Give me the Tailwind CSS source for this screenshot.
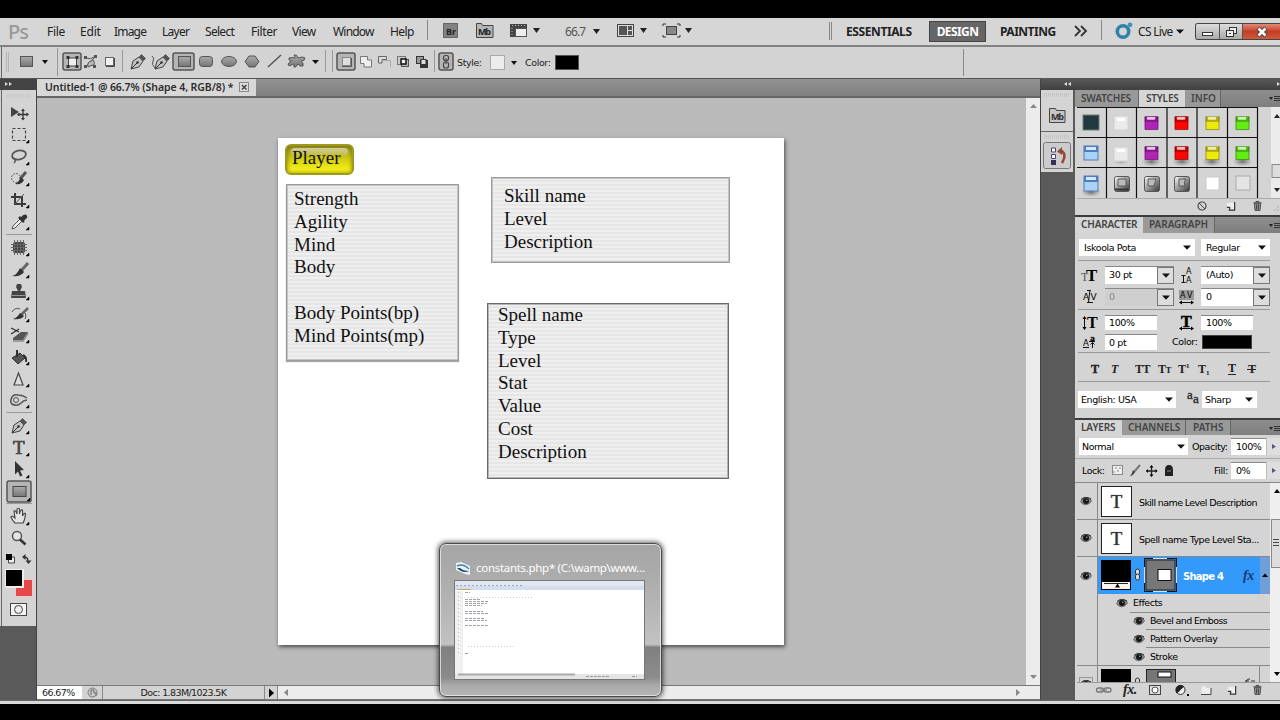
<!DOCTYPE html>
<html lang="en">
<head>
<meta charset="utf-8">
<title>Untitled-1 @ 66.7%</title>
<script src="https://cdn.jsdelivr.net/npm/@tailwindcss/browser@4"></script>
</head>
<body class="bg-black">
<svg class="absolute size-0">
  <defs>
    <linearGradient id="gr" x1="0" y1="0" x2="0" y2="1"><stop offset="0" stop-color="#ababab"/><stop offset="1" stop-color="#757575"/></linearGradient>
    <linearGradient id="metal" x1="0" y1="0" x2="1" y2="1"><stop offset="0" stop-color="#fff"/><stop offset=".5" stop-color="#999"/><stop offset="1" stop-color="#333"/></linearGradient>
    <radialGradient id="sh"><stop offset="0" stop-color="#555" stop-opacity=".8"/><stop offset="1" stop-color="#777" stop-opacity="0"/></radialGradient>
    <symbol id="eye" viewBox="0 0 12 10"><path d="M.5 5.5Q3 1 7 1.500T11.500 5Q9 9 5.500 8.800T.5 5.500Z" fill="#8a8a8a" stroke="#555" stroke-width=".7"/><circle cx="6" cy="5" r="3" fill="#161616"/><circle cx="6.800" cy="4.200" r=".8" fill="#aaa"/><path d="M1 3.500Q5 -.5 11 3" fill="none" stroke="#333"/></symbol>
    <symbol id="menu" viewBox="0 0 11 8"><path d="M0 2h4L2 5z" fill="#222"/><path d="M5 1.500h6M5 3.500h6M5 5.500h6" stroke="#333" stroke-width="1"/></symbol>
    <symbol id="down" viewBox="0 0 8 5"><path d="M0 .5h8L4 4.800z" fill="#111"/></symbol>
    <symbol id="trash" viewBox="0 0 10 12"><path d="M1.500 4h7l-.7 7.500H2.200z" fill="#999" stroke="#444"/><path d="M.5 3h9M3 1.500h4M4 5v5.500M6 5v5.500" stroke="#333"/></symbol>
    <symbol id="new" viewBox="0 0 11 11"><path d="M1 2h8v8H3V7H1z" fill="#eee"/><path d="M9.500 1v9H3M1 7h3v3" fill="none" stroke="#333" stroke-width="1.300"/></symbol>
    <symbol id="pen" viewBox="0 0 16 16"><path d="M1 15l2-8 6-4 4 4-4 6z" fill="#c2c2c2" stroke="#444"/><path d="M9.500 2.500l2-2 4 4-2 2z" fill="#555" stroke="#333" stroke-width=".6"/><path d="M1 15l6-6" stroke="#333"/><circle cx="7.500" cy="8.500" r="1.300" fill="#333"/></symbol>
    <symbol id="chip" viewBox="0 0 16 16"><rect x=".8" y=".8" width="14.400" height="14.400" rx="1" fill="currentColor"/><rect x=".8" y=".8" width="14.400" height="6" fill="#000" opacity=".25"/><rect x="3" y="1.500" width="9" height="3" rx="1" fill="#fff" opacity=".75"/><path d="M1 1v14h14V1" fill="none" stroke="#000" stroke-opacity=".35"/></symbol>
    <symbol id="logo" viewBox="0 0 18 17"><circle cx="8" cy="9.500" r="5.700" fill="none" stroke="#2e82a8" stroke-width="3.600"/><circle cx="15" cy="2.800" r="2.400" fill="#3b93b8"/></symbol>
  </defs>
</svg>
<div class="flex h-[720px] w-[1280px] flex-col overflow-hidden bg-black pt-[18px] font-['Noto_Sans','Open_Sans',sans-serif] text-[#222]">

  <!-- Menu bar -->
  <header class="flex h-[27px] shrink-0 items-center bg-[#d6d6d6] text-[12px] leading-none">
    <div class="w-[47px] pl-[8px] text-[20px] font-medium tracking-[-1px] text-[#999]">Ps</div>
    <nav class="flex w-[380px] items-center">
      <span class="w-[33px] tracking-[-.3px]">File</span><span class="w-[34px] tracking-[-.2px]">Edit</span><span class="w-[48px] tracking-[-.8px]">Image</span><span class="w-[43px] tracking-[-.7px]">Layer</span><span class="w-[46px] tracking-[-.7px]">Select</span><span class="w-[41px] tracking-[-.4px]">Filter</span><span class="w-[41px] tracking-[-.7px]">View</span><span class="w-[57px] tracking-[-.8px]">Window</span><span class="tracking-[-.6px]">Help</span>
    </nav>
    <svg class="shrink-0" width="133" height="27" viewBox="427 18 133 27">
      <path d="M427.500 20v20" stroke="#888"/>
      <rect x="443.500" y="23.500" width="14" height="14" fill="#828282" stroke="#666"/>
      <text x="446" y="35" font-family="Open Sans" font-size="9" font-weight="700" fill="#222">Br</text>
      <path d="M476.500 37.500v-14h5l1 2h10.500v12z" fill="#b5b5b5" stroke="#444"/>
      <text x="478" y="35" font-family="Open Sans" font-size="9" font-weight="700" fill="#222" textLength="13">Mb</text>
      <path d="M510 24h17v4h-12v9h-5z" fill="#444"/><path d="M512 25.500h14M512 28v8" stroke="#bbb" stroke-dasharray="1 2"/><rect x="515.500" y="28.500" width="11" height="8" fill="#eee" stroke="#555"/>
      <path d="M533 28h7l-3.500 5z" fill="#222"/>
    </svg>
    <span class="w-[33px] pl-[5px] tracking-[-.9px] text-[#555]">66.7</span>
    <svg class="mr-[17px] shrink-0" width="7" height="5"><path d="M0 0h7L3.500 5z" fill="#222"/></svg>
    <svg class="shrink-0" width="229" height="27" viewBox="617 18 229 27">
      <rect x="617.500" y="24.500" width="16" height="12" fill="#ddd" stroke="#444"/><path d="M619 26h8v9h-8zM628 26h4v4h-4zM628 31h4v4h-4z" fill="#555"/>
      <path d="M640 28h7l-3.500 5zM685 28h7l-3.500 5z" fill="#222"/>
      <rect x="666.500" y="26.500" width="10" height="8" fill="#888" stroke="#444"/><path d="M663 26v-2h3M677 24h3v2M663 35v2h3M677 37h3v-2" fill="none" stroke="#333"/><path d="M829.500 22v18M831.500 22v18" stroke="#888"/>
    </svg>
    <span class="w-[83px] text-[12px] font-bold tracking-[-.4px]">ESSENTIALS</span>
    <span class="flex h-[21px] w-[57px] items-center justify-center border border-[#444] bg-[#666] font-bold tracking-[-.6px] text-white">DESIGN</span>
    <span class="ml-[14px] w-[74px] font-bold tracking-[-.5px]">PAINTING</span>
    <svg class="shrink-0" width="64" height="27" viewBox="1074 18 64 27"><path d="M1075 26l5 5-5 5M1081 26l5 5-5 5" fill="none" stroke="#333" stroke-width="1.800"/><path d="M1101.500 20v20" stroke="#888"/><use href="#logo" x="1115" y="22" width="18" height="17"/></svg>
    <span class="w-[38px] tracking-[-.7px]">CS Live</span>
    <svg class="mr-[11px] shrink-0" width="8" height="5"><use href="#down" width="8" height="5"/></svg>
    <div class="flex h-[17px] w-[85px] overflow-hidden rounded-l-[3px] border border-r-0 border-[#444]">
      <div class="w-[24px] border-r border-[#555] bg-linear-to-b from-[#ddd] to-[#aaa]"><svg width="23" height="16"><rect x="6.500" y="8.500" width="10" height="3" fill="#fff" stroke="#333"/></svg></div>
      <div class="w-[23px] border-r border-[#555] bg-linear-to-b from-[#ddd] to-[#aaa]"><svg width="23" height="16"><rect x="9.500" y="3.500" width="7" height="6" fill="#eee" stroke="#333"/><rect x="6.500" y="6.500" width="7" height="6" fill="#eee" stroke="#333"/><rect x="9" y="9" width="2" height="1" fill="#333"/></svg></div>
      <div class="grow bg-linear-to-b from-[#e08a78] via-[#c33c22] to-[#cf5a3e]"><svg width="38" height="16"><path d="M15 4l8 8M23 4l-8 8" stroke="#444" stroke-width="4.500"/><path d="M15.500 4.500l7 7M22.500 4.500l-7 7" stroke="#fff" stroke-width="2.500"/></svg></div>
    </div>
  </header>
  <div class="h-[2px] shrink-0 bg-[#828282]"></div>

  <!-- Options bar -->
  <div class="flex h-[31px] shrink-0 items-center bg-[#d3d3d3] text-[11px] leading-none">
    <svg class="shrink-0" width="457" height="31" viewBox="0 47 457 31">
      <path d="M1.500 47v31" stroke="#666"/><path d="M6.500 52v20M8.500 52v20" stroke="#b5b5b5"/>
      <rect x="20.500" y="56.500" width="12" height="10" fill="url(#gr)" stroke="#555"/><path d="M42 60h6l-3 4z" fill="#111"/>
      <path d="M57.500 48v28M122.500 50v22M325.500 50v22M332.500 50v22M434.500 50v22" stroke="#999"/>
      <g fill="#b5b5b5" stroke="#555" stroke-width="1.500"><rect x="63" y="53" width="18" height="17" rx="2"/><rect x="173" y="53" width="21" height="17" rx="2"/><rect x="337" y="53" width="18" height="17" rx="2"/><rect x="439" y="53" width="14" height="17" rx="2"/></g>
      <rect x="68.500" y="58" width="8" height="8" fill="#eee" stroke="#444"/><path d="M66.500 56h3v3h-3zM75.500 56h3v3h-3zM66.500 65h3v3h-3zM75.500 65h3v3h-3z" fill="#333"/>
      <path d="M86 66q4-2 8-8M86 58q5 2 8-1" fill="none" stroke="#555"/><path d="M88 67q-1-3 1-5l4-2q2 2 1 5-3 0-6 2z" fill="#bbb" stroke="#555"/><path d="M84 56h3v3h-3zM94 55h3v3h-3zM84 65h3v3h-3zM93 65h3v3h-3z" fill="#555"/>
      <rect x="105.500" y="57.500" width="8" height="8" fill="#f0f0f0" stroke="#666"/><path d="M106 66.500h8.500V58" fill="none" stroke="#444"/>
      <use href="#pen" x="130" y="54" width="16" height="16"/><use href="#pen" x="154" y="54" width="16" height="16"/><path d="M152 56q3 2 1 5t2 7" fill="none" stroke="#555"/>
      <g fill="url(#gr)" stroke="#555"><rect x="178.500" y="56.500" width="12" height="10"/><rect x="199.500" y="56.500" width="13" height="10" rx="3"/><ellipse cx="229" cy="61.500" rx="7.500" ry="5"/><path d="M249 56h6l4 5.500-4 5.500h-6l-4-5.500z"/><path d="M294 55q3-1 4 3 5-2 7 0 0 3-4 3 3 2 2 5-3 1-5-2-2 4-4 3 0-3-1-3-3 3-5 1 0-2 3-4-3-1-2-3 4-1 6 0 0-2-1-3z"/></g>
      <path d="M268 67l13-12" stroke="#555" stroke-width="1.500"/><path d="M312 60h7l-3.500 4z" fill="#111"/>
      <rect x="342.500" y="57.500" width="8" height="8" fill="#ddd" stroke="#888"/><path d="M342 66.500h9.500V58" fill="none" stroke="#555"/>
      <path d="M360.500 56.500h7v3.500h4v7h-7.500v-3.500h-3.500z" fill="#eee" stroke="#777"/><path d="M378.500 63v-6.500h8v3h-4.500v3.500z" fill="#ddd" stroke="#666"/><path d="M383.500 60.500h7v6" fill="none" stroke="#aaa"/>
      <rect x="397.500" y="56.500" width="8" height="8" fill="#ccc" stroke="#777"/><rect x="401.500" y="59.500" width="7" height="7" fill="#bbb" stroke="#555"/><rect x="401" y="59" width="5" height="5" fill="#eee" stroke="#111" stroke-width="1.500"/>
      <rect x="416.500" y="56.500" width="7" height="7" fill="#999" stroke="#333"/><path d="M420 60h8v8h-8z" fill="#333"/><rect x="421" y="59.500" width="5" height="5" fill="#ddd" stroke="#333"/>
      <rect x="443.500" y="55.500" width="5" height="5" rx="2" fill="none" stroke="#444" stroke-width="1.200"/><rect x="443.500" y="62" width="5" height="6" rx="2" fill="none" stroke="#444" stroke-width="1.200"/><path d="M446 58v6" stroke="#444"/>
    </svg>
    <span class="w-[33px] font-['DejaVu_Sans'] text-[9.500px] tracking-[-.4px]">Style:</span>
    <div class="size-[15px] border border-[#aaa] bg-[#ececec]"></div>
    <svg class="mx-[6px] shrink-0" width="7" height="4"><path d="M0 0h6L3 4z" fill="#111"/></svg>
    <span class="ml-[1px] w-[30px] font-['DejaVu_Sans'] text-[9.500px] tracking-[-.4px]">Color:</span>
    <div class="h-[15px] w-[24px] border border-[#555] bg-black"></div>
    <div class="ml-[384px] h-[27px] w-px bg-[#888]"></div>
  </div>
  <div class="h-px shrink-0 bg-[#555]"></div>

  <!-- Workspace -->
  <main class="flex h-[621px] shrink-0">
    <!-- Tool palette -->
    <aside class="flex w-[37px] shrink-0 flex-col border-r border-[#444] bg-[#5a5a5a]">
      <svg class="shrink-0 bg-[#444]" width="36" height="11"><path d="M5 3l3 2-3 2zM9 3l3 2-3 2z" fill="#ddd"/></svg>
      <svg class="shrink-0 bg-[#d4d4d4]" width="36" height="536" viewBox="0 90 36 536">
        <path d="M1.500 90v536" stroke="#666"/><path d="M7 95h24M7 97h24" stroke="#bbb" stroke-dasharray="1 1"/>
        <path d="M6 234.500h26M6 412.500h26M6 503.500h26" stroke="#999"/>
        <path d="M11 107l8 5-8 5z" fill="#444"/><path d="M23 110v9M18.500 114.500h9" stroke="#333" stroke-width="1.300"/><path d="M23 108.500l2 2.500h-4zM23 120.500l2-2.500h-4zM17 114.500l2.500-2v4zM29 114.500l-2.500-2v4z" fill="#333"/>
        <rect x="12.500" y="128.500" width="13" height="12" fill="none" stroke="#444" stroke-width="1.200" stroke-dasharray="3 2"/>
        <ellipse cx="19" cy="155" rx="7" ry="4.500" fill="none" stroke="#555" stroke-width="1.800" transform="rotate(-12 19 155)"/><path d="M13 158q4 2 1 5" fill="none" stroke="#555" stroke-width="1.500"/>
        <circle cx="16" cy="178" r="4.500" fill="none" stroke="#444" stroke-dasharray="1.500 1.500"/><path d="M26 172l-6 7" stroke="#555" stroke-width="3"/><path d="M21 177l3 3q-2 5-9 4q4-2 6-7z" fill="#333"/>
        <path d="M15 193v11h11M11 197h11v10" fill="none" stroke="#3a3a3a" stroke-width="2"/><path d="M15 204l9-10" stroke="#555"/>
        <path d="M12 229l1-3 7-7 2 2-7 7z" fill="#eee" stroke="#555"/><path d="M19 217l5 5M21 219l3-3q2-1 2 1l-3 3" stroke="#333" stroke-width="2.500" fill="none"/>
        <rect x="13" y="242" width="12" height="11" rx="2.500" fill="#444"/><path d="M14.500 240v15M17.500 240v15M20.500 240v15M23.500 240v15M11 244.500h16M11 247.500h16M11 250.500h16" stroke="#666"/>
        <path d="M28 263l-7 8" stroke="#666" stroke-width="3"/><path d="M20 268l4 4q-3 5-12 4q5-1 8-8z" fill="#333"/>
        <path d="M17 284h4l1 3-2 4h5l1 7H11l1-7h6l-2-4z" fill="#444"/><path d="M12 295.500h13" stroke="#999"/>
        <path d="M28 308l-7 7" stroke="#666" stroke-width="2.500"/><path d="M20 313l4 3q-3 4-11 3q4-1 7-6z" fill="#333"/><path d="M12 312q3-5 8-3M25 313q2 3 0 6" fill="none" stroke="#555"/>
        <path d="M13 338l8-6h7l-5 8H13z" fill="#555"/><path d="M13 341h10l5-8" fill="none" stroke="#888" stroke-width="1.500"/><path d="M11 328l8 4M11 334l8-5" stroke="#333" stroke-width="1.300"/>
        <path d="M12 358l8-5 5 5-7 6z" fill="#555" stroke="#333"/><path d="M17 350v7M23 355q4 2 3 7" fill="none" stroke="#333" stroke-width="2"/>
        <path d="M18.500 373l4.500 12h-9z" fill="#ddd" stroke="#444" stroke-width="1.200"/>
        <path d="M11 400q1-6 7-5q5 0 9 3M12 404q5 3 9-1q3-3 6-3M11 400q-1 3 2 5" fill="none" stroke="#555" stroke-width="1.500"/><circle cx="16" cy="400" r="2.500" fill="none" stroke="#555"/>
        <use href="#pen" x="11" y="418" width="16" height="16"/>
        <text x="13" y="453.500" font-family="Liberation Serif" font-size="19" stroke="#444" stroke-width=".7" fill="#444">T</text>
        <path d="M15 461l9 9-4 .5 2.500 5-2.500 1-2-5-3 3z" fill="#333"/>
        <rect x="7" y="481" width="24" height="21" rx="2" fill="#b5b5b5" stroke="#555" stroke-width="1.500"/><rect x="13" y="486.500" width="13" height="10" fill="url(#gr)" stroke="#444"/>
        <path d="M15 523q-3-3-4-6q1-2 4 1l-1-7q2-1 3 3v-5q2-1 2.500 0v5q1-5 3-4v6q2-4 3-2q-.500 6-2.500 9z" fill="#e4e4e4" stroke="#444" stroke-width="1.100"/>
        <circle cx="17" cy="536" r="4.500" fill="#e5e5e5" stroke="#555" stroke-width="1.500"/><path d="M20 539.500l5.500 5" stroke="#333" stroke-width="2.500"/>
        <path d="M8.500 557h6v6h-6z" fill="#eee" stroke="#444"/><path d="M6 554h6v6H6z" fill="#000"/><path d="M24 557q4 0 4 4" fill="none" stroke="#333" stroke-width="1.300"/><path d="M22 557l3.500-3v6zM28.500 564l-3-3.500h6z" fill="#333"/>
        <rect x="15.500" y="579.500" width="17" height="17" fill="#e6484a" stroke="#f1c8c8"/><rect x="5" y="569" width="19" height="19" fill="#eee"/><rect x="6" y="570" width="16" height="16" fill="#000"/>
        <rect x="10.500" y="603.500" width="16" height="12" fill="#f5f5f5" stroke="#444"/><circle cx="18.500" cy="609.500" r="4" fill="#eee" stroke="#444"/>
        <path d="M29 140v3h-3zM29 162v3h-3zM29 183v3h-3zM29 205v3h-3zM29 227v3h-3zM29 253v3h-3zM29 275v3h-3zM29 297v3h-3zM29 319v3h-3zM29 340v3h-3zM29 362v3h-3zM29 384v3h-3zM29 405v3h-3zM29 431v3h-3zM29 453v3h-3zM29 475v3h-3zM30 498v3h-3zM29 522v3h-3z" fill="#000" stroke="#000" stroke-width=".5"/>
      </svg>
    </aside>

    <!-- Document window -->
    <section class="flex w-[1003px] shrink-0 flex-col">
      <div class="flex h-[19px] shrink-0 items-stretch border-b-2 border-[#666] bg-linear-to-b from-[#929292] to-[#808080]">
        <div class="flex w-[219px] items-center bg-[#d8d8d8] pl-[8px] text-[10.500px] font-semibold">
          <span class="w-[194px] whitespace-nowrap tracking-[-.08px] text-[#2c2c2c]">Untitled-1 @ 66.7% (Shape 4, RGB/8) *</span>
          <svg width="11" height="11"><rect x=".5" y=".5" width="9" height="9" fill="#ddd" stroke="#888"/><path d="M3 3l4.500 4.500M7.500 3L3 7.500" stroke="#444" stroke-width="1.500"/></svg>
        </div>
      </div>
      <div class="flex h-[587px] shrink-0">
        <div class="relative w-[989px] bg-[#bababa]">
          <div class="absolute left-[241px] top-[40px] h-[507px] w-[506px] bg-white font-['Liberation_Serif',serif] text-[19px] leading-[22.800px] text-[#111] shadow-[1px_2px_4px_rgba(0,0,0,.6)]">
            <div class="absolute left-[7px] top-[6px] h-[31px] w-[69px] rounded-[6px] border-2 border-[#a09a1c] bg-linear-to-b from-[#99932a] via-[#d4ce10] to-[#fffb1c] pl-[5px] leading-[24px] shadow-[inset_0_0_4px_rgba(80,75,0,.7)]"><div class="absolute left-[4px] right-[4px] top-[2px] h-[8px] rounded-[4px] bg-linear-to-b from-white/55 to-white/5"></div><span class="relative">Player</span></div>
            <div class="absolute left-[8px] top-[46px] h-[177px] w-[173px] border border-[#9b9b9b] bg-[repeating-linear-gradient(180deg,#efefef_0_2px,#e6e6e6_2px_4px)] pl-[7px] pt-[3px] shadow-[inset_0_0_0_1px_#c4c4c4,0_1px_1px_#aaa]">Strength<br>Agility<br>Mind<br>Body<br><br>Body Points(bp)<br>Mind Points(mp)</div>
            <div class="absolute left-[213px] top-[39px] h-[86px] w-[239px] border border-[#9b9b9b] bg-[repeating-linear-gradient(180deg,#efefef_0_2px,#e6e6e6_2px_4px)] pl-[12px] pt-[7px] shadow-[inset_0_0_0_1px_#c4c4c4]">Skill name<br>Level<br>Description</div>
            <div class="absolute left-[209px] top-[165px] h-[176px] w-[242px] border border-[#6a6a6a] bg-[repeating-linear-gradient(180deg,#efefef_0_2px,#e6e6e6_2px_4px)] pl-[10px] shadow-[inset_0_0_0_1px_#b5b5b5]">Spell name<br>Type<br>Level<br>Stat<br>Value<br>Cost<br>Description</div>
          </div>
        </div>
        <svg class="shrink-0 bg-[#ececec]" width="14" height="587"><path d="M4 10h7L7.500 6zM4 577h7l-3.500 4z" fill="#888"/></svg>
      </div>
      <div class="flex h-[15px] shrink-0 items-center border-b border-t border-[#777] bg-[#d3d3d3] font-['DejaVu_Sans'] text-[9.500px] leading-none tracking-[-.6px]">
        <span class="flex h-full w-[45px] items-center bg-white pl-[5px]">66.67%</span>
        <svg class="ml-[5px] mr-[4px]" width="11" height="11"><circle cx="5.500" cy="5.500" r="4.500" fill="#ccc" stroke="#777"/><path d="M4 3v5M4 3h3v3h2v3" fill="none" stroke="#666"/></svg>
        <span class="flex h-full w-[163px] items-center justify-center border-x border-[#888]">Doc: 1.83M/1023.5K</span>
        <svg class="h-full border-r border-[#888]" width="13" height="13"><path d="M4 2.500l5 4.500-5 4.500z" fill="#000"/></svg>
        <div class="flex h-full grow items-center justify-between bg-[#ececec] pl-[6px] pr-[20px]"><svg width="4" height="7"><path d="M4 0v7L0 3.500z" fill="#888"/></svg><svg width="4" height="7"><path d="M0 0v7l4-3.500z" fill="#888"/></svg></div>
      </div>
    </section>

    <!-- Panel dock -->
    <aside class="flex w-[240px] shrink-0 flex-col border-l border-[#444] bg-[#5a5a5a]">
      <svg class="shrink-0 bg-linear-to-b from-[#585858] to-[#404040]" width="239" height="11"><path d="M26 3l-3 2 3 2zM30 3l-3 2 3 2zM236 3l3 2-3 2z" fill="#ddd"/></svg>
      <div class="flex">
        <svg class="shrink-0 bg-[#d4d4d4]" width="32" height="82" viewBox="1041 90 32 82">
          <path d="M1044 94h26M1044 96h26M1044 136h26M1044 138h26" stroke="#b5b5b5" stroke-dasharray="1 1"/><path d="M1041 131.500h32" stroke="#666"/>
          <path d="M1049.500 122.500v-14h6l1 2h8.500v12z" fill="#c5c5c5" stroke="#444"/><text x="1051" y="119.500" font-family="Open Sans" font-size="9" font-weight="700" fill="#333" textLength="13">Mb</text>
          <rect x="1043.500" y="142.500" width="27" height="26" rx="2" fill="#ccc" stroke="#777"/><path d="M1051.500 148h4v4h-4zM1051.500 154.500h4v4h-4z" fill="#fff" stroke="#447"/><path d="M1051 160h5v5h-5z" fill="#335"/><path d="M1059 151h3q5 4 0 12" fill="none" stroke="#944a38" stroke-width="2.500"/><path d="M1057 151.500l5-4.500v8z" fill="#944a38"/>
        </svg>
        <div class="ml-[2px] flex w-[205px] shrink-0 flex-col text-[10px] text-[#444]">

          <!-- Styles -->
          <div class="flex h-[17px] bg-linear-to-b from-[#8e8e8e] to-[#7e7e7e] font-semibold leading-[16px]">
            <span class="w-[64px] border-r border-[#666] bg-[#999] pl-[6px] tracking-[-.15px]">SWATCHES</span><span class="w-[46px] bg-[#d6d6d6] pl-[7px] tracking-[-.2px]">STYLES</span><span class="w-[36px] border-r border-[#666] bg-[#999] pl-[6px]">INFO</span>
            <svg class="ml-[48px] mt-[5px]" width="11" height="8"><use href="#menu" width="11" height="8"/></svg>
          </div>
          <svg class="shrink-0 bg-[#d4d4d4]" width="205" height="108" viewBox="1075 107 205 108">
            <path d="M1077 107.500h181M1106.500 108v90M1136.500 108v90M1167 108v90M1197 108v90M1227.500 108v90M1257.500 108v90M1077 137.500h181M1077 167.500h181" stroke="#111" stroke-width="1.200"/><path d="M1077 198.500h203" stroke="#aaa"/>
            <g fill="url(#sh)"><ellipse cx="1121" cy="162" rx="8" ry="3" opacity=".4"/><ellipse cx="1151.500" cy="161.500" rx="10" ry="5"/><ellipse cx="1182" cy="161.500" rx="10" ry="5"/><ellipse cx="1212" cy="161.500" rx="10" ry="5"/><ellipse cx="1242.500" cy="161.500" rx="10" ry="5"/><ellipse cx="1091" cy="192" rx="10" ry="5"/></g>
            <rect x="1083" y="115" width="16" height="15" fill="#22383f" stroke="#6a7a7a"/>
            <rect x="1114" y="116" width="14" height="14" fill="#ebebeb" stroke="#d0d0d0"/><rect x="1114" y="147" width="14" height="14" fill="#ebebeb" stroke="#d0d0d0"/><path d="M1117 118h8v3h-8zM1117 149h8v3h-8z" fill="#fff"/>
            <g color="#b322b8"><use href="#chip" x="1144" y="115" width="15" height="16"/><use href="#chip" x="1144" y="145" width="15" height="16"/></g>
            <g color="#fb0505"><use href="#chip" x="1174" y="115" width="15" height="16"/><use href="#chip" x="1174" y="145" width="15" height="16"/></g>
            <g color="#ece90e"><use href="#chip" x="1205" y="115" width="15" height="16"/><use href="#chip" x="1205" y="145" width="15" height="16"/></g>
            <g color="#62ec12"><use href="#chip" x="1235" y="115" width="15" height="16"/><use href="#chip" x="1235" y="145" width="15" height="16"/></g>
            <rect x="1084" y="146" width="14" height="14" fill="#a9d3f5" stroke="#5878b0"/><path d="M1084 146h14v6h-14z" fill="#4a7fc8"/><path d="M1086 147h10v3h-10z" fill="#d6e8fb"/>
            <rect x="1084" y="176" width="14" height="15" fill="#a9d3f5" stroke="#5878b0"/><path d="M1084 176h14v6h-14z" fill="#4a7fc8"/><path d="M1086 177h10v3h-10z" fill="#d6e8fb"/>
            <g fill="url(#metal)" stroke="#555"><rect x="1114.500" y="176.500" width="15" height="15" rx="2"/><rect x="1144.500" y="176.500" width="15" height="15" rx="2"/><rect x="1174.500" y="176.500" width="15" height="15" rx="2"/></g>
            <path d="M1118 179h8v7h-8zM1148 179h8l-2 7h-6zM1179 179h7q-3 3-1 7h-6z" fill="#bbb" stroke="#444" stroke-width=".8"/><path d="M1115 189.500h13" stroke="#333" stroke-width="2"/>
            <rect x="1206" y="177" width="13" height="13" fill="#fff" stroke="#ccc"/><rect x="1236" y="176" width="14" height="14" fill="#e4e4e4" stroke="#aaa"/>
            <path d="M1271 107h9v91h-9z" fill="#ececec"/><path d="M1274 118h6l-3-4zM1274 188h6l-3 4z" fill="#222"/><rect x="1272" y="164.500" width="9" height="13" fill="#ddd" stroke="#888"/>
            <circle cx="1202" cy="206" r="4" fill="none" stroke="#444" stroke-width="1.200"/><path d="M1199 203l6 6" stroke="#444"/>
            <use href="#new" x="1226" y="201" width="10" height="10"/><use href="#trash" x="1253" y="200" width="9" height="11"/><path d="M1274 211l5-5M1277 211l2-2" stroke="#999" stroke-dasharray="1 1"/>
          </svg>
          <div class="h-[2px] bg-[#3c3c3c]"></div>

          <!-- Character -->
          <div class="flex h-[16px] bg-linear-to-b from-[#8e8e8e] to-[#7e7e7e] font-semibold leading-[15px]">
            <span class="w-[68px] bg-[#d6d6d6] pl-[6px] tracking-[-.15px]">CHARACTER</span><span class="w-[72px] border-r border-[#666] bg-[#999] pl-[6px] tracking-[-.05px]">PARAGRAPH</span>
            <svg class="ml-[54px] mt-[5px]" width="11" height="8"><use href="#menu" width="11" height="8"/></svg>
          </div>
          <div class="flex h-[185px] flex-col bg-[#d4d4d4] pl-[3px] pt-[6px] font-['DejaVu_Sans'] text-[9.500px] leading-none tracking-[-.4px] text-black">
            <div class="flex h-[17px] gap-[6px] pl-[1px]">
              <div class="flex w-[116px] items-center justify-between bg-white pl-[5px] pr-[4px]"><span>Iskoola Pota</span><svg width="8" height="5"><use href="#down" width="8" height="5"/></svg></div>
              <div class="flex w-[69px] items-center justify-between bg-white pl-[5px] pr-[4px]"><span>Regular</span><svg width="8" height="5"><use href="#down" width="8" height="5"/></svg></div>
            </div>
            <div class="mt-[4px] h-px w-[192px] bg-[#999]"></div>
            <div class="mt-[5px] flex h-[18px] items-center">
              <svg class="shrink-0" width="27" height="18"><text x="8" y="15" font-family="Liberation Serif" font-weight="700" font-size="17">T</text><text x="3" y="15" font-family="Liberation Serif" font-size="12" fill="#555">T</text></svg>
              <div class="flex h-full w-[69px] border-t border-[#888] bg-white"><span class="grow pl-[4px] pt-[3px]">30 pt</span><span class="flex w-[17px] items-center justify-center border border-[#777] bg-[#ddd]"><svg width="8" height="5"><use href="#down" width="8" height="5"/></svg></span></div>
              <svg class="shrink-0" width="27" height="18"><g font-family="DejaVu Sans" font-size="8"><text x="12" y="7.500">A</text><text x="12" y="16.500">A</text></g><path d="M9.500 9v8M7.500 9.500h4M7.500 16.500h4" stroke="#111"/></svg>
              <div class="flex h-full w-[69px] border-t border-[#888] bg-white"><span class="grow pl-[5px] pt-[3px]">(Auto)</span><span class="flex w-[17px] items-center justify-center border border-[#777] bg-[#ddd]"><svg width="8" height="5"><use href="#down" width="8" height="5"/></svg></span></div>
            </div>
            <div class="mt-[4px] flex h-[18px] items-center">
              <svg class="shrink-0" width="27" height="18"><text x="5" y="12" font-family="DejaVu Sans" font-size="9">A</text><text x="12.500" y="12" font-family="DejaVu Sans" font-size="9">V</text><path d="M12 2l-1.500 12M9 2.500h4M9 14.500h6" stroke="#111"/></svg>
              <div class="flex h-full w-[69px] border-t border-[#888] bg-[#cfcfcf]"><span class="grow pl-[4px] pt-[3px] text-[#888]">0</span><span class="flex w-[17px] items-center justify-center border border-[#777] bg-[#ddd]"><svg width="8" height="5"><use href="#down" width="8" height="5"/></svg></span></div>
              <svg class="shrink-0" width="27" height="18"><rect x="5" y="2" width="15" height="10" fill="#999"/><text x="6" y="10" font-family="DejaVu Sans" font-size="8">A</text><text x="13" y="10" font-family="DejaVu Sans" font-size="8">V</text><path d="M7 14.500h12" stroke="#111"/><path d="M5 14.500l3-2v4zM20 14.500l-3-2v4z"/></svg>
              <div class="flex h-full w-[69px] border-t border-[#888] bg-white"><span class="grow pl-[5px] pt-[3px]">0</span><span class="flex w-[17px] items-center justify-center border border-[#777] bg-[#ddd]"><svg width="8" height="5"><use href="#down" width="8" height="5"/></svg></span></div>
            </div>
            <div class="mt-[3px] h-px w-[192px] bg-[#999]"></div>
            <div class="mt-[5px] flex h-[15px] items-center">
              <svg class="shrink-0 overflow-visible" width="27" height="16"><text x="9" y="13" font-family="Liberation Serif" font-weight="700" font-size="16">T</text><path d="M6.500 3v10" stroke="#111"/><path d="M4.500 4l2-3 2 3zM4.500 12l2 3 2-3z"/></svg>
              <div class="flex h-full w-[52px] items-center border-t border-[#888] bg-white pl-[4px]">100%</div>
              <svg class="ml-[17px] shrink-0 overflow-visible" width="27" height="16"><text x="7" y="11.500" font-family="Liberation Serif" font-weight="700" font-size="16" stroke="#000" stroke-width=".5">T</text><path d="M7 13.500h12" stroke="#111"/><path d="M5 13.500l3-2v4zM20 13.500l-3-2v4z"/></svg>
              <div class="flex h-full w-[52px] items-center border-t border-[#888] bg-white pl-[5px]">100%</div>
            </div>
            <div class="mt-[4px] flex h-[16px] items-center">
              <svg class="shrink-0" width="27" height="16"><text x="5" y="12" font-family="DejaVu Sans" font-size="8.500">A</text><text x="12" y="6.500" font-family="DejaVu Sans" font-size="7.500" font-weight="700">a</text><path d="M5 13.500h6M14.500 14V8.500M12.500 10.500l2-2 2 2M11 7.500h6" stroke="#111" fill="none"/></svg>
              <div class="flex h-full w-[52px] items-center border-t border-[#888] bg-white pl-[4px]">0 pt</div>
              <span class="w-[45px] pl-[15px]">Color:</span>
              <div class="h-[14px] w-[50px] border border-[#444] bg-black"></div>
            </div>
            <div class="mt-[2px] h-px w-[192px] bg-[#999]"></div>
            <svg class="shrink-0" width="192" height="28" viewBox="1078 354 192 28"><g font-family="Liberation Serif" font-size="12" font-weight="700" fill="#222"><text x="1091" y="374" stroke="#222" stroke-width=".4">T</text><text x="1111" y="374" font-style="italic">T</text><text x="1135" y="374">TT</text><text x="1158" y="374">T<tspan font-size="9">T</tspan></text><text x="1178" y="374">T</text><text x="1186" y="369" font-size="7">1</text><text x="1198" y="374">T</text><text x="1206" y="376" font-size="7">1</text><text x="1228" y="373">T</text><text x="1248" y="374">T</text></g><path d="M1228 375.500h8M1247 370.500h9" stroke="#222"/></svg>
            <div class="h-px w-[192px] bg-[#999]"></div>
            <div class="mt-[9px] flex h-[17px]">
              <div class="flex w-[98px] items-center justify-between bg-white pl-[3px] pr-[3px]"><span>English: USA</span><svg width="8" height="5"><use href="#down" width="8" height="5"/></svg></div>
              <svg class="shrink-0 overflow-visible" width="26" height="16"><g font-family="Liberation Serif" font-size="13" fill="#222" stroke="#222" stroke-width=".3"><text x="11" y="8">a</text><text x="17" y="12">a</text></g></svg>
              <div class="flex w-[55px] items-center justify-between bg-white pl-[3px] pr-[4px]"><span>Sharp</span><svg width="8" height="5"><use href="#down" width="8" height="5"/></svg></div>
            </div>
          </div>
          <div class="h-[2px] bg-[#3c3c3c]"></div>

          <!-- Layers -->
          <div class="flex h-[15px] bg-linear-to-b from-[#8e8e8e] to-[#7e7e7e] font-semibold leading-[14px]">
            <span class="w-[47px] bg-[#d6d6d6] pl-[6px] tracking-[-.1px]">LAYERS</span><span class="w-[64px] border-r border-[#666] bg-[#999] pl-[6px] tracking-[-.1px]">CHANNELS</span><span class="w-[45px] border-r border-[#666] bg-[#999] pl-[7px]">PATHS</span>
            <svg class="ml-[38px] mt-[5px]" width="11" height="8"><use href="#menu" width="11" height="8"/></svg>
          </div>
          <div class="flex h-[265px] flex-col bg-[#d4d4d4] font-['DejaVu_Sans'] text-[9.500px] leading-none tracking-[-.45px] text-black">
            <div class="flex h-[24px] items-center border-b border-[#aaa] pl-[4px]">
              <div class="flex h-[17px] w-[109px] items-center justify-between bg-white pl-[3px] pr-[3px]"><span>Normal</span><svg width="8" height="5"><use href="#down" width="8" height="5"/></svg></div>
              <span class="w-[43px] pl-[4px]">Opacity:</span><div class="flex h-[17px] w-[35px] items-center border-t border-[#888] bg-white pl-[5px]">100%</div>
              <svg class="shrink-0 border-l border-[#bbb] bg-[#dedede]" width="14" height="17"><path d="M5 6l4 2.500-4 2.500z" fill="#558"/></svg>
            </div>
            <div class="flex h-[24px] items-center border-b border-[#888] pl-[7px]">
              <span class="w-[29px]">Lock:</span>
              <svg class="shrink-0" width="105" height="20" viewBox="1111 461 105 20"><rect x="1112.500" y="465.500" width="10" height="9" fill="#eee" stroke="#888"/><path d="M1115 467h2v2h-2zM1119 467h2v2h-2zM1117 470h2v2h-2zM1113 471h2v2h-2z" fill="#bbb"/><path d="M1140 465l-6 7" stroke="#777" stroke-width="2"/><path d="M1133 470l2 2q-2 4-5 4q2-2 3-6z" fill="#444"/><path d="M1151.500 466v10M1146.500 471h10" stroke="#222" stroke-width="1.300"/><path d="M1151.500 465l2 2.500h-4zM1151.500 477l2-2.500h-4zM1146 471l2-2v4zM1157.500 471l-2-2v4z"/><path d="M1165 470q0-5 4-5t4 5v6h-8z" fill="#222"/><path d="M1167 471h4" stroke="#888"/></svg>
              <span class="-ml-[2px] w-[17px]">Fill:</span><div class="flex h-[17px] w-[35px] items-center border-t border-[#888] bg-white pl-[5px]">0%</div>
              <svg class="shrink-0 border-l border-[#bbb] bg-[#dedede]" width="14" height="17"><path d="M5 6l4 2.500-4 2.500z" fill="#558"/></svg>
            </div>
            <div class="flex h-[199px] overflow-hidden">
              <div class="flex w-[195px] shrink-0 flex-col pl-[2px]">
                <div class="flex h-[37px] shrink-0 items-center border-b border-[#888]"><div class="flex h-full w-[21px] items-center border-r border-[#888] pl-[3px]"><svg width="13" height="10"><use href="#eye" width="12" height="10"/></svg></div><div class="ml-[3px] flex size-[31px] items-center justify-center border border-[#222] bg-white font-['Liberation_Serif'] text-[19px] tracking-normal text-[#333] [text-shadow:0_0_1px_#444]">T</div><span class="pl-[7px] pt-[3px] whitespace-nowrap tracking-[-.6px]">Skill name Level Description</span></div>
                <div class="flex h-[37px] shrink-0 items-center border-b border-[#888]"><div class="flex h-full w-[21px] items-center border-r border-[#888] pl-[3px]"><svg width="13" height="10"><use href="#eye" width="12" height="10"/></svg></div><div class="ml-[3px] flex size-[31px] items-center justify-center border border-[#222] bg-white font-['Liberation_Serif'] text-[19px] tracking-normal text-[#333] [text-shadow:0_0_1px_#444]">T</div><span class="pl-[7px] pt-[3px] whitespace-nowrap tracking-[-.5px]">Spell name Type Level Sta...</span></div>
                <div class="flex h-[37px] shrink-0 items-center"><div class="flex h-full w-[21px] items-center border-r border-[#888] pl-[3px]"><svg width="13" height="10"><use href="#eye" width="12" height="10"/></svg></div>
                  <div class="flex h-full grow items-center bg-[#3399fb]">
                    <svg class="shrink-0" width="85" height="37" viewBox="1098 557 85 37"><rect x="1101" y="560" width="30" height="30" fill="#000"/><rect x="1102" y="582" width="28" height="7" fill="#f7f7ee"/><path d="M1104 583.500h24" stroke="#222"/><path d="M1117.500 583.500l2.500 4h-5z"/><rect x="1135.500" y="569" width="4" height="6" rx="2" fill="#ddd" stroke="#333"/><rect x="1135.500" y="574" width="4" height="6" rx="2" fill="#ddd" stroke="#333"/><rect x="1144.500" y="558.500" width="32" height="33" fill="none" stroke="#111"/><path d="M1153 558.500h14M1153 591.500h14M1144.500 567v16M1176.500 567v16" stroke="#ddd"/><rect x="1146" y="560" width="29" height="30" fill="#777" stroke="#222"/><rect x="1158" y="569.500" width="13" height="11" fill="#fff" stroke="#111"/></svg>
                    <span class="w-[60px] pt-[2px] text-[10px] font-bold tracking-[-.75px] text-white">Shape 4</span>
                    <span class="font-['Liberation_Serif'] text-[14px] font-bold italic tracking-[-.5px] text-[#173a70]">fx</span>
                    <svg class="ml-auto h-full bg-[#6f9fd6]" width="10" height="37"><path d="M2 20h6l-3-3.500z"/></svg>
                  </div>
                </div>
                <div class="flex h-[72px] shrink-0 border-b border-[#888]"><div class="w-[21px] border-r border-[#888]"></div>
                  <div class="flex grow flex-col">
                    <div class="flex h-[18px] items-center pl-[18px]"><svg class="mr-[4px]" width="13" height="10"><use href="#eye" width="12" height="10"/></svg>Effects</div>
                    <div class="ml-[32px] flex h-[18px] items-center border-t border-[#888] pl-[3px] tracking-[-.65px]"><svg class="mr-[4px]" width="13" height="10"><use href="#eye" width="12" height="10"/></svg>Bevel and Emboss</div>
                    <div class="ml-[48px] flex h-[18px] items-center border-t border-[#888]"><svg class="-ml-[13px] mr-[4px]" width="13" height="10"><use href="#eye" width="12" height="10"/></svg>Pattern Overlay</div>
                    <div class="ml-[48px] flex h-[18px] items-center border-t border-[#888]"><svg class="-ml-[13px] mr-[4px]" width="13" height="10"><use href="#eye" width="12" height="10"/></svg>Stroke</div>
                  </div>
                </div>
                <svg class="shrink-0" width="193" height="16" viewBox="1077 666 193 16"><path d="M1097.500 666v16M1259.500 666v16" stroke="#888"/><rect x="1079.500" y="677.500" width="13" height="10" fill="none" stroke="#999"/><use href="#eye" x="1080" y="679" width="12" height="10"/><path d="M1101 669h30v13h-30z"/><rect x="1135.500" y="678" width="4" height="8" rx="2" fill="none" stroke="#333"/><rect x="1146.500" y="669.500" width="29" height="20" fill="#777" stroke="#222"/><rect x="1158" y="672" width="13" height="5" fill="#fff" stroke="#111"/><path d="M1246 682q1-4 4-3M1245 681h4M1251 681h4" fill="none" stroke="#333"/></svg>
              </div>
              <svg class="shrink-0 bg-[#efefef]" width="10" height="199" viewBox="1270 483 10 199"><path d="M1274 493h6l-3-4zM1274 672h6l-3 4z"/><rect x="1271.500" y="519.500" width="10" height="48" fill="#ddd" stroke="#888"/><path d="M1273 539.500h6M1273 542.500h6M1273 545.500h6" stroke="#444"/></svg>
            </div>
            <svg class="shrink-0" width="205" height="18" viewBox="1075 682 205 18"><path d="M1077 682.500h203" stroke="#999"/>
              <rect x="1096.500" y="688" width="7" height="4" rx="2" fill="none" stroke="#777" stroke-width="1.300"/><rect x="1104" y="688" width="7" height="4" rx="2" fill="none" stroke="#777" stroke-width="1.300"/><path d="M1100 690h7" stroke="#777"/>
              <text x="1123" y="694" font-family="Liberation Serif" font-style="italic" font-weight="700" font-size="14" fill="#222">fx.</text>
              <rect x="1149.500" y="685.500" width="11" height="9" fill="#ddd" stroke="#444"/><circle cx="1155" cy="690" r="3" fill="#fff" stroke="#555"/>
              <circle cx="1180.500" cy="690" r="4.500" fill="#eee" stroke="#333"/><path d="M1177 693.500a4.500 4.500 0 0 1 7-7z" fill="#222"/><path d="M1187 694h2v2h-2z"/>
              <path d="M1201.500 694.500v-8h4l1 1.500h4.500v6.500z" fill="#eee"/><path d="M1201 694.500h10V688" fill="none" stroke="#444"/>
              <use href="#new" x="1227" y="685" width="10" height="10"/><use href="#trash" x="1253" y="684" width="9" height="11"/></svg>
          </div>
        </div>
      </div>
    </aside>
  </main>
  <div class="h-[4px] shrink-0 border-t border-[#666] bg-[#d8d8d8]"></div>

  <!-- Taskbar window preview -->
  <div class="absolute left-[439px] top-[543px] flex h-[154px] w-[223px] flex-col rounded-[7px] border border-[#4a4a4a] bg-[linear-gradient(180deg,#a5a5a5_0%,#adadad_25%,#c2c2c2_66%,#808080_68%,#8c8c8c_88%,#aaa_93%,#b5b5b5_100%)] px-[14px] pt-[16px] shadow-[inset_0_0_0_1px_rgba(240,240,240,.75),0_0_5px_1px_rgba(0,0,0,.65)]">
    <div class="flex h-[20px] items-start pl-[2px] text-[11.500px] leading-[16px] text-white">
      <svg class="mr-[6px] mt-[2px] shrink-0" width="14" height="13"><path d="M0 1l5-1 9 4v9l-5-1-9-4z" fill="#e8f2f6"/><path d="M1 4q6-3 12 3" fill="none" stroke="#3b86a8" stroke-width="1.500"/><path d="M1 6q6 6 12 3q-6 0-9-3z" fill="#246"/></svg>
      <span class="whitespace-nowrap tracking-[-.3px]">constants.php* (C:\wamp\www...</span>
    </div>
    <div class="h-[100px] w-[191px] border border-[#777] bg-white">
      <svg width="189" height="98" viewBox="455 581 189 98"><path d="M455 581h189v9h-189z" fill="#e3e8f0"/><path d="M455 586h189v4h-189z" fill="#d2deef"/><path d="M456 585.500h68" stroke="#9aa6b8" stroke-dasharray="2 2"/><path d="M457 589.500h14" stroke="#c9ad62"/><path d="M455 591h8v85h-8z" fill="#f0f0f0"/><path d="M458.500 592v63" stroke="#bbb" stroke-dasharray="1 3"/><path d="M465 592.500h5M465 599.500h15M465 601.500h24M465 603.500h22M465 605.500h17M465 611.500h18M465 613.500h23M465 618.500h20M465 620.500h22M465 625.500h23M465 653.500h3" stroke="#a0a0a8" stroke-dasharray="3 1"/><path d="M468 597.500h64M468 646.500h48" stroke="#ccc" stroke-dasharray="1 2"/><path d="M455 674h189v5h-189z" fill="#e4e4e4"/><path d="M458 674.500h117" stroke="#aaa" stroke-width="2"/><path d="M586 676.500h24M632 676.500h5" stroke="#999" stroke-dasharray="3 1"/></svg>
    </div>
  </div>
</div>
</body>
</html>
